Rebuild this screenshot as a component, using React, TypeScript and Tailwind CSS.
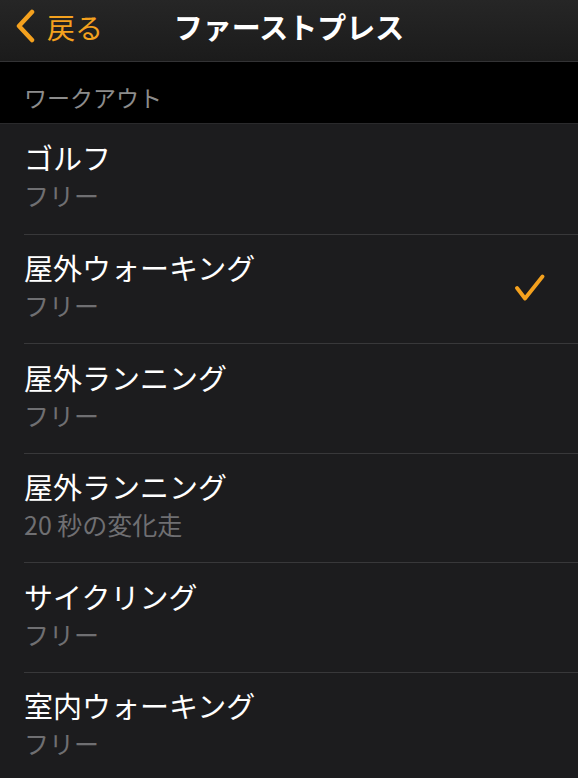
const items = [
  { title: "ゴルフ", sub: "フリー", checked: false },
  { title: "屋外ウォーキング", sub: "フリー", checked: true },
  { title: "屋外ランニング", sub: "フリー", checked: false },
  { title: "屋外ランニング", sub: "20 秒の変化走", checked: false },
  { title: "サイクリング", sub: "フリー", checked: false },
  { title: "室内ウォーキング", sub: "フリー", checked: false },
];

const font = {
  fontFamily: '"Noto Sans CJK JP", "Noto Sans", sans-serif',
};

export default function App() {
  return (
    <div className="flex h-[778px] w-[578px] flex-col overflow-hidden bg-black" style={font}>
      {/* Nav bar */}
      <div className="relative flex h-[62px] shrink-0 items-center border-b border-[#333335] bg-gradient-to-b from-[#262626] to-[#1b1b1b] pb-[8px]">
        <div className="flex items-center pl-[13px] text-[#f4a11e]">
          <svg width="24" height="36" viewBox="0 0 24 36" fill="none">
            <path
              d="M19 3 L6 17 L19 31"
              stroke="currentColor"
              strokeWidth="4.5"
              strokeLinecap="round"
              strokeLinejoin="round"
            />
          </svg>
          <span className="ml-[10px] text-[28px] leading-none">戻る</span>
        </div>
        <div className="pointer-events-none absolute inset-x-0 text-center text-[29px] font-bold leading-none text-white">
          ファーストプレス
        </div>
      </div>

      {/* Section header */}
      <div className="flex h-[61px] shrink-0 items-end pb-[14px] pl-[24px] text-[23px] leading-none text-[#8c8c8c]">
        ワークアウト
      </div>

      {/* List */}
      <div className="flex-1 border-t border-[#2a2a2c] bg-[#1c1c1e]">
        {items.map((item, i) => (
          <div key={i} className="flex h-[109.5px] items-center pl-[24px]">
            <div
              className={`flex h-full flex-1 items-center pr-[32px] pb-[6px] ${
                i > 0 ? "border-t border-[#38383a]" : ""
              }`}
            >
              <div className="flex-1">
                <div className="text-[29px] leading-none text-white">{item.title}</div>
                <div className="mt-[11px] text-[25px] leading-none text-[#6f6f72]">
                  {item.sub}
                </div>
              </div>
              {item.checked && (
                <svg width="32" height="28" viewBox="0 0 32 28" fill="none" className="mt-[4px] text-[#f4a11e]">
                  <path
                    d="M3 14 L11 24.5 L28.5 2.5"
                    stroke="currentColor"
                    strokeWidth="3.8"
                    strokeLinecap="round"
                    strokeLinejoin="round"
                  />
                </svg>
              )}
            </div>
          </div>
        ))}
      </div>
    </div>
  );
}
